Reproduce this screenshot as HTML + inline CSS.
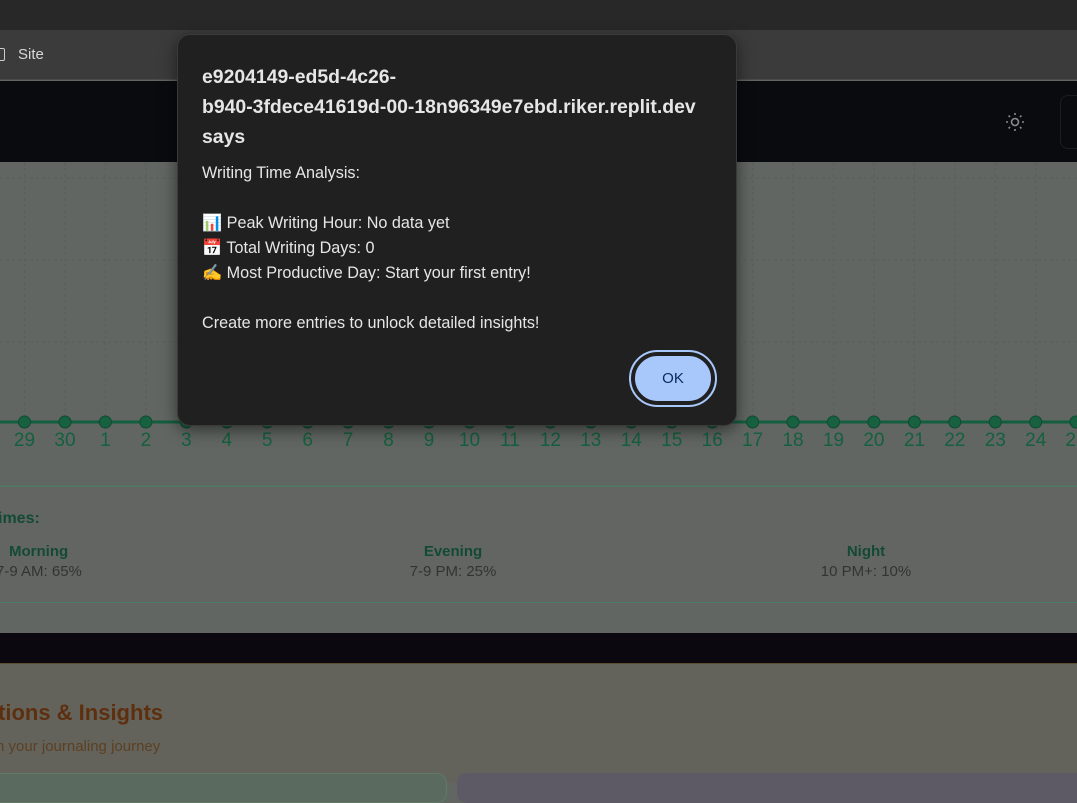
<!DOCTYPE html>
<html><head><meta charset="utf-8"><style>
*{margin:0;padding:0;box-sizing:border-box}
body{width:1077px;height:783px;overflow:hidden;background:#616662;font-family:"Liberation Sans",sans-serif;position:relative}
.abs{position:absolute}
.dlg{font-family:"Liberation Sans",sans-serif}
</style></head><body>
<div class="abs" style="left:0;top:0;width:1077px;height:30px;background:#282828"></div>
<div class="abs" style="left:0;top:30px;width:1077px;height:50px;background:#3b3b3b;border-bottom:1px solid #4a4a4a"></div>
<div class="abs" style="left:-6px;top:48px;width:11px;height:13px;border:1.5px solid #ccc;border-radius:2px"></div>
<div class="abs" style="left:18px;top:46px;color:#d8d8d8;font-size:15px">Site</div>
<div class="abs" style="left:0;top:81px;width:1077px;height:81px;background:#0a0b0f"></div>
<svg class="abs" style="left:1003px;top:110px" width="24" height="24" viewBox="0 0 24 24" stroke="#8a8a8a" stroke-width="1.6" fill="none"><circle cx="12" cy="12" r="3.5"/><path d="M12 3v2M12 19v2M3 12h2M19 12h2M5.6 5.6l1.4 1.4M17 17l1.4 1.4M5.6 18.4L7 17M17 7l1.4-1.4"/></svg>
<div class="abs" style="left:1060px;top:95px;width:30px;height:54px;border:1px solid #1a1d24;border-radius:8px"></div>
<svg class="abs" style="left:0;top:162px" width="1077" height="471">
<g stroke="#56605c" stroke-dasharray="3 3" stroke-width="1">
<line x1="0" y1="16" x2="1077" y2="16"/><line x1="0" y1="98" x2="1077" y2="98"/><line x1="0" y1="180" x2="1077" y2="180"/>
</g>
<line x1="0" y1="324" x2="1077" y2="324" stroke="#4e7a66"/>
<line x1="0" y1="440" x2="1077" y2="440" stroke="#4e7a66"/>
</svg>
<svg class="abs" style="left:0;top:162px" width="1077" height="300">
<g stroke="#56605c" stroke-dasharray="3 3">
<line x1="24.5" y1="0" x2="24.5" y2="254"/><line x1="65" y1="0" x2="65" y2="254"/><line x1="105.4" y1="0" x2="105.4" y2="254"/><line x1="145.9" y1="0" x2="145.9" y2="254"/><line x1="186.3" y1="0" x2="186.3" y2="254"/><line x1="752.6" y1="0" x2="752.6" y2="254"/><line x1="793" y1="0" x2="793" y2="254"/><line x1="833.5" y1="0" x2="833.5" y2="254"/><line x1="873.9" y1="0" x2="873.9" y2="254"/><line x1="914.4" y1="0" x2="914.4" y2="254"/><line x1="954.8" y1="0" x2="954.8" y2="254"/><line x1="995.3" y1="0" x2="995.3" y2="254"/><line x1="1035.7" y1="0" x2="1035.7" y2="254"/>
</g>
<line x1="0" y1="260" x2="1077" y2="260" stroke="#135e3e" stroke-width="3"/>
<g fill="#176040" stroke="#0f4a30" stroke-width="1">
<circle cx="24.5" cy="260" r="6"/><circle cx="65" cy="260" r="6"/><circle cx="105.4" cy="260" r="6"/><circle cx="145.9" cy="260" r="6"/><circle cx="186.3" cy="260" r="6"/><circle cx="226.8" cy="260" r="6"/><circle cx="267.2" cy="260" r="6"/><circle cx="307.7" cy="260" r="6"/><circle cx="348.1" cy="260" r="6"/><circle cx="388.6" cy="260" r="6"/><circle cx="429" cy="260" r="6"/><circle cx="469.5" cy="260" r="6"/><circle cx="509.9" cy="260" r="6"/><circle cx="550.4" cy="260" r="6"/><circle cx="590.8" cy="260" r="6"/><circle cx="631.3" cy="260" r="6"/><circle cx="671.7" cy="260" r="6"/><circle cx="712.2" cy="260" r="6"/><circle cx="752.6" cy="260" r="6"/><circle cx="793" cy="260" r="6"/><circle cx="833.5" cy="260" r="6"/><circle cx="873.9" cy="260" r="6"/><circle cx="914.4" cy="260" r="6"/><circle cx="954.8" cy="260" r="6"/><circle cx="995.3" cy="260" r="6"/><circle cx="1035.7" cy="260" r="6"/><circle cx="1076" cy="260" r="6"/>
</g>
<g fill="#14603f" font-family="Liberation Sans" font-size="19" text-anchor="middle">
<text x="24.5" y="284">29</text><text x="65" y="284">30</text><text x="105.4" y="284">1</text><text x="145.9" y="284">2</text><text x="186.3" y="284">3</text><text x="226.8" y="284">4</text><text x="267.2" y="284">5</text><text x="307.7" y="284">6</text><text x="348.1" y="284">7</text><text x="388.6" y="284">8</text><text x="429" y="284">9</text><text x="469.5" y="284">10</text><text x="509.9" y="284">11</text><text x="550.4" y="284">12</text><text x="590.8" y="284">13</text><text x="631.3" y="284">14</text><text x="671.7" y="284">15</text><text x="712.2" y="284">16</text><text x="752.6" y="284">17</text><text x="793" y="284">18</text><text x="833.5" y="284">19</text><text x="873.9" y="284">20</text><text x="914.4" y="284">21</text><text x="954.8" y="284">22</text><text x="995.3" y="284">23</text><text x="1035.7" y="284">24</text><text x="1076" y="284">25</text>
</g>
</svg>
<div class="abs" style="left:0;top:487px;width:1077px;height:115px;background:#636563"></div>
<div class="abs" style="left:0;top:486px;width:1077px;height:1px;background:#4e7a66"></div>
<div class="abs" style="left:0;top:602px;width:1077px;height:1px;background:#4e7a66"></div>
<div class="abs" style="left:-2px;top:510px;color:#134a37;font-weight:bold;font-size:16px">imes:</div>
<div class="abs" style="left:9px;top:543px;color:#134a37;font-weight:bold;font-size:15px">Morning</div>
<div class="abs" style="left:-4px;top:563px;color:#333;font-size:15px">7-9 AM: 65%</div>
<div class="abs" style="left:353px;width:200px;text-align:center;top:543px;color:#134a37;font-weight:bold;font-size:15px">Evening</div>
<div class="abs" style="left:353px;width:200px;text-align:center;top:563px;color:#333;font-size:15px">7-9 PM: 25%</div>
<div class="abs" style="left:766px;width:200px;text-align:center;top:543px;color:#134a37;font-weight:bold;font-size:15px">Night</div>
<div class="abs" style="left:766px;width:200px;text-align:center;top:563px;color:#333;font-size:15px">10 PM+: 10%</div>
<div class="abs" style="left:0;top:633px;width:1077px;height:31px;background:#0b0810;border-bottom:1px solid #5a5030"></div>
<div class="abs" style="left:0;top:664px;width:1077px;height:119px;background:#63635c"></div>
<div class="abs" style="left:-2px;top:700px;color:#5e2f0e;font-weight:bold;font-size:22px">tions &amp; Insights</div>
<div class="abs" style="left:-4px;top:738px;color:#5c4022;font-size:15px">n your journaling journey</div>
<div class="abs" style="left:-10px;top:773px;width:457px;height:30px;background:#5a6a5f;border:1px solid #607a66;border-radius:10px"></div>
<div class="abs" style="left:457px;top:773px;width:640px;height:30px;background:#5d5a66;border-radius:10px"></div>
<div class="abs dlg" style="left:177px;top:34px;width:560px;height:392px;background:#202020;border:1px solid #3a3a3a;border-radius:13px;box-shadow:0 4px 16px rgba(0,0,0,.5);color:#e6e6e6">
<div class="abs" style="left:24px;top:27px;font-size:19.4px;font-weight:bold;line-height:30px;white-space:nowrap">e9204149-ed5d-4c26-<br>b940-3fdece41619d-00-18n96349e7ebd.riker.replit.dev<br>says</div>
<div class="abs" style="left:24px;top:126px;font-size:16.2px;line-height:25px;width:530px;white-space:nowrap">Writing Time Analysis:<br><br>📊 Peak Writing Hour: No data yet<br>📅 Total Writing Days: 0<br>✍ Most Productive Day: Start your first entry!<br><br>Create more entries to unlock detailed insights!</div>
<div class="abs" style="left:451px;top:315px;width:88px;height:57px;border:2px solid #a8c7fa;border-radius:29px;padding:2px">
<div style="width:100%;height:100%;background:#a8c7fa;border:2px solid #202020;border-radius:26px;color:#0a2a5c;font-size:15px;text-align:center;line-height:45px">OK</div></div>
</div>
</body></html>
